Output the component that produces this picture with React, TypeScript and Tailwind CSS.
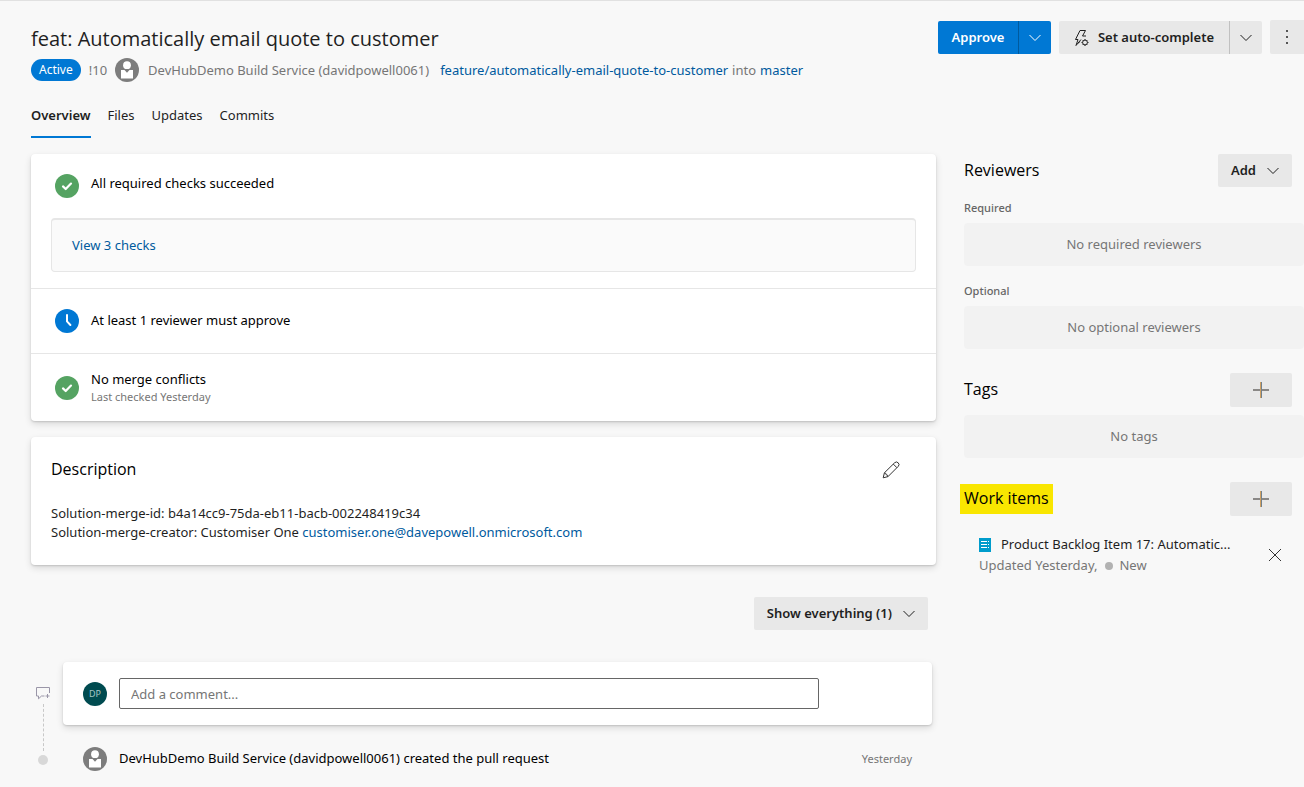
import type { ReactNode } from "react";

type IconProps = { className?: string };

function ChevronDown({ className = "" }: IconProps) {
  return (
    <svg className={`shrink-0 ${className}`} width="12" height="8" viewBox="0 0 12 8" fill="none" stroke="currentColor" aria-hidden="true">
      <path d="M0.5 1 L6 6.5 L11.5 1" />
    </svg>
  );
}

function BotAvatar() {
  return (
    <svg className="shrink-0" width="24" height="24" viewBox="0 0 24 24" role="img" aria-label="DevHubDemo Build Service">
      <circle cx="12" cy="12" r="12" fill="#7d7d7d" />
      <circle cx="12" cy="7.2" r="3.9" fill="#fff" />
      <path d="M6 12 H9.5 L12 14.8 L14.5 12 H18 V20.5 H6 Z" fill="#fff" />
    </svg>
  );
}

function SuccessIcon() {
  return (
    <svg className="shrink-0" width="24" height="24" viewBox="0 0 24 24" aria-hidden="true">
      <circle cx="12" cy="12" r="12" fill="#55a362" />
      <path d="M8 12.4 L10.7 15 L16 9.6" fill="none" stroke="#fff" strokeWidth="2.2" strokeLinecap="round" strokeLinejoin="round" />
    </svg>
  );
}

function WaitingIcon() {
  return (
    <svg className="shrink-0" width="24" height="24" viewBox="0 0 24 24" aria-hidden="true">
      <circle cx="12" cy="12" r="12" fill="#0078d4" />
      <path d="M12 6 V12.4 L15.4 16" fill="none" stroke="#fff" strokeWidth="2" strokeLinecap="round" strokeLinejoin="round" />
    </svg>
  );
}

function AutoCompleteIcon() {
  return (
    <svg className="shrink-0" width="16" height="18" viewBox="0 0 16 18" fill="none" stroke="#1f1f1f" aria-hidden="true">
      <path d="M7 10.5 L2 16.5 L4 10.5 H1.5 L6 1.5 H11.5 L8.5 7 H12" />
      <path d="M4 14.2 L6.2 12.5" />
      <circle cx="11" cy="13.5" r="2.4" />
      <path d="M11 10 V11 M11 16 V17 M7.5 13.5 H8.5 M13.5 13.5 H14.5 M8.6 11.1 L9.3 11.8 M12.7 15.2 L13.4 15.9 M8.6 15.9 L9.3 15.2 M12.7 11.8 L13.4 11.1" />
    </svg>
  );
}

function MoreIcon() {
  return (
    <svg width="4" height="16" viewBox="0 0 4 16" fill="#555" aria-hidden="true">
      <path d="M1 1h2v2H1zM1 7h2v2H1zM1 13h2v2H1z" />
    </svg>
  );
}

function PlusIcon() {
  return (
    <svg width="16" height="16" viewBox="0 0 16 16" fill="none" aria-hidden="true">
      <path d="M0 8 H16" stroke="#8a8886" strokeWidth="2" />
      <path d="M7.5 0 V16" stroke="#d0a060" />
      <path d="M8.5 0 V16" stroke="#71808c" />
    </svg>
  );
}

function CloseIcon() {
  return (
    <svg width="14" height="14" viewBox="0 0 14 14" fill="none" stroke="#333" aria-hidden="true">
      <path d="M1 1 L13 13 M13 1 L1 13" />
    </svg>
  );
}

function EditIcon() {
  return (
    <svg width="18" height="18" viewBox="0 0 18 18" fill="none" stroke="#333" strokeLinejoin="round" aria-hidden="true">
      <path d="M1.2 16.8 L2.4 11.8 L12.6 1.8 A2.2 2.2 0 0 1 16.2 5.4 L6 15.6 Z" />
      <path d="M11.3 3.1 L14.9 6.7 M2.4 11.8 L3.8 12.4 L4.2 13.8 L5.5 14.2 L6 15.6" />
    </svg>
  );
}

function BacklogIcon() {
  return (
    <svg className="shrink-0" width="12" height="14" viewBox="0 0 12 14" aria-hidden="true">
      <path d="M0 0h12v14H0z" fill="#009ccc" />
      <path d="M2 3.5h6M9 3.5h1M2 6.5h6M9 6.5h1M2 9.5h6M9 9.5h1" stroke="#fff" />
    </svg>
  );
}

function CommentIcon() {
  return (
    <svg className="shrink-0" width="16" height="14" viewBox="0 0 16 14" fill="none" stroke="#9a96a8" aria-hidden="true">
      <path d="M9.5 10 H6.5 L3.5 12.8 V10 H1.5 V1.5 H14.5 V7" />
      <path d="M12.5 8 V12 M10.5 10 H14.5" />
    </svg>
  );
}

function Card({ children, className = "" }: { children: ReactNode; className?: string }) {
  return (
    <section className={`rounded bg-white shadow-[0_3px_7px_rgba(0,0,0,0.13),0_1px_2px_rgba(0,0,0,0.14)] ${className}`}>{children}</section>
  );
}

function SectionTitle({ children }: { children: ReactNode }) {
  return <h2 className="pb-[2px] font-['Segoe_UI','Open_Sans',sans-serif] text-base leading-[22px]">{children}</h2>;
}

function EmptyBox({ children }: { children: ReactNode }) {
  return (
    <div className="flex h-[43px] items-center justify-center rounded bg-[#f2f2f2] pt-px text-[13px] text-[#767676]">{children}</div>
  );
}

function AddButton({ label }: { label: string }) {
  return (
    <button type="button" aria-label={label} className="flex h-[34px] w-[62px] items-center justify-center rounded-xs bg-[#e8e8e8]">
      <PlusIcon />
    </button>
  );
}

function Header() {
  return (
    <header className="flex items-start justify-between border-t border-[#e1e1e1] pt-[19px] pl-[31px]">
      <div>
        <h1 className="font-['Segoe_UI','Open_Sans',sans-serif] text-xl leading-[38px] text-[#1f1f1f]">feat: Automatically email quote to customer</h1>
        <div className="flex items-center text-[13px] leading-6 text-[#767676]">
          <span className="flex h-[22px] items-center rounded-full bg-[#0078d4] px-2 text-xs text-white">Active</span>
          <span className="mx-2">!10</span>
          <BotAvatar />
          <span className="ml-[9px]">DevHubDemo Build Service (davidpowell0061)</span>
          <a href="#source" className="ml-[11px] text-[#005a9e]">feature/automatically-email-quote-to-customer</a>
          <span className="mx-1">into</span>
          <a href="#target" className="text-[#005a9e]">master</a>
        </div>
      </div>
      <div className="flex items-end gap-2 text-[13px] font-semibold text-[#1f1f1f]">
        <div className="flex h-[33px] overflow-hidden rounded-xs bg-[#0078d4] text-white">
          <button type="button" className="w-20">Approve</button>
          <button type="button" aria-label="More approval options" className="flex w-[33px] items-center justify-center border-l border-[#005a9e]">
            <ChevronDown />
          </button>
        </div>
        <div className="flex h-[33px] overflow-hidden rounded-xs bg-[#e8e8e8]">
          <button type="button" className="flex w-[170px] items-center justify-center gap-2">
            <AutoCompleteIcon />
            Set auto-complete
          </button>
          <button type="button" aria-label="More completion options" className="flex w-[33px] items-center justify-center border-l border-[#c0c0c0]">
            <ChevronDown />
          </button>
        </div>
        <button type="button" aria-label="More actions" className="flex h-[34px] w-[34px] items-center justify-center rounded-l-xs bg-[#e8e8e8]">
          <MoreIcon />
        </button>
      </div>
    </header>
  );
}

function Tabs() {
  return (
    <nav className="mt-3 flex gap-[17px] pl-[31px] text-[13px] leading-[42px] text-[#1f1f1f]">
      <a href="#overview" aria-current="page" className="border-b-2 border-[#0078d4] font-semibold">Overview</a>
      <a href="#files">Files</a>
      <a href="#updates">Updates</a>
      <a href="#commits">Commits</a>
    </nav>
  );
}

function Checks() {
  return (
    <Card className="text-[13px]">
      <div className="px-5 pt-5 pb-4">
        <div className="flex gap-3 pl-1">
          <SuccessIcon />
          <p className="leading-[18px]">All required checks succeeded</p>
        </div>
        <div className="mt-5 flex h-[54px] items-center rounded border border-t-2 border-[#e6e6e6] bg-[#fafafa] px-5">
          <a href="#checks" className="text-[#005a9e]">View 3 checks</a>
        </div>
      </div>
      <div className="flex h-[65px] items-center gap-3 border-t border-[#e6e6e6] px-6">
        <WaitingIcon />
        <p>At least 1 reviewer must approve</p>
      </div>
      <div className="flex h-[68px] items-center gap-3 border-t border-[#e6e6e6] px-6">
        <SuccessIcon />
        <div>
          <p className="leading-[18px]">No merge conflicts</p>
          <p className="text-[11px] leading-[18px] text-[#767676]">Last checked Yesterday</p>
        </div>
      </div>
    </Card>
  );
}

function Description() {
  return (
    <Card className="px-5 pt-4 pb-[23px]">
      <div className="flex h-[33px] items-center justify-between">
        <SectionTitle>Description</SectionTitle>
        <button type="button" aria-label="Edit description" className="mr-4">
          <EditIcon />
        </button>
      </div>
      <div className="mt-[18px] text-[13px] leading-[19px] text-[#1f1f1f]">
        <p>Solution-merge-id: b4a14cc9-75da-eb11-bacb-002248419c34</p>
        <p>
          Solution-merge-creator: Customiser One{" "}
          <a href="mailto:customiser.one@davepowell.onmicrosoft.com" className="text-[#005a9e]">customiser.one@davepowell.onmicrosoft.com</a>
        </p>
      </div>
    </Card>
  );
}

function Timeline() {
  return (
    <div className="flex gap-2 pr-1">
      <div className="flex w-6 flex-col items-center pt-6">
        <CommentIcon />
        <span className="mt-1 h-[47px] border-l border-dashed border-[#c8c8c8]" />
        <span className="mt-1 size-[10px] rounded-full bg-[#d8d8d8]" />
      </div>
      <div className="min-w-0 flex-1">
        <Card className="flex h-[63px] items-center gap-3 px-5">
          <span className="flex size-6 shrink-0 items-center justify-center rounded-full bg-[#004b50] text-[9px] text-[#a5c4c5]">DP</span>
          <input
            type="text"
            aria-label="Add a comment"
            placeholder="Add a comment..."
            className="mr-[93px] h-[31px] min-w-0 flex-1 rounded-xs border border-[#666] bg-white px-[11px] text-[13px] placeholder:text-[#767676]"
          />
        </Card>
        <div className="mt-[22px] flex items-center gap-3 px-5 text-[13px]">
          <BotAvatar />
          <p className="flex-1">DevHubDemo Build Service (davidpowell0061) created the pull request</p>
          <time className="text-[11px] text-[#767676]">Yesterday</time>
        </div>
      </div>
    </div>
  );
}

function Sidebar() {
  return (
    <aside className="w-[340px] shrink-0">
      <div className="flex items-center justify-between pr-3">
        <SectionTitle>Reviewers</SectionTitle>
        <button type="button" className="flex h-[33px] items-center gap-[11px] rounded-xs bg-[#e8e8e8] px-[13px] text-[13px] font-semibold text-[#1f1f1f]">
          Add
          <ChevronDown />
        </button>
      </div>
      <h3 className="mt-3 mb-[6px] text-[11px] leading-[18px] font-medium text-[#666]">Required</h3>
      <EmptyBox>No required reviewers</EmptyBox>
      <h3 className="mt-4 mb-[6px] text-[11px] leading-[18px] font-medium text-[#666]">Optional</h3>
      <EmptyBox>No optional reviewers</EmptyBox>
      <div className="mt-6 mb-2 flex items-center justify-between pr-3">
        <SectionTitle>Tags</SectionTitle>
        <AddButton label="Add tag" />
      </div>
      <EmptyBox>No tags</EmptyBox>
      <div className="mt-6 flex items-center justify-between pr-3">
        <div className="-ml-1 bg-[#f9e600] px-1 py-[3px]">
          <SectionTitle>Work items</SectionTitle>
        </div>
        <AddButton label="Add work item" />
      </div>
      <div className="mt-[18px] flex items-center justify-between pr-[22px] pl-[15px]">
        <div className="text-[13px] leading-[21px]">
          <a href="#work-item-17" className="flex items-center gap-[10px] text-[#1f1f1f]">
            <BacklogIcon />
            Product Backlog Item 17: Automatic...
          </a>
          <p className="flex items-center text-[#767676]">
            Updated Yesterday,
            <span className="mr-[6px] ml-2 size-2 rounded-full bg-[#b2b2b2]" />
            New
          </p>
        </div>
        <button type="button" aria-label="Remove work item">
          <CloseIcon />
        </button>
      </div>
    </aside>
  );
}

export default function App() {
  return (
    <div className="min-h-screen overflow-x-hidden bg-[#f8f8f8] font-['Segoe_UI','Noto_Sans',sans-serif] text-black">
      <Header />
      <Tabs />
      <div className="mt-4 flex gap-7 pl-[31px]">
        <main className="min-w-0 flex-1">
          <Checks />
          <div className="mt-4">
            <Description />
          </div>
          <div className="mt-8 mb-8 flex justify-end pr-2">
            <button type="button" className="flex h-[33px] items-center gap-[11px] rounded-xs bg-[#e8e8e8] px-[13px] text-[13px] font-semibold text-[#1f1f1f]">
              Show everything (1)
              <ChevronDown />
            </button>
          </div>
          <Timeline />
        </main>
        <Sidebar />
      </div>
    </div>
  );
}
